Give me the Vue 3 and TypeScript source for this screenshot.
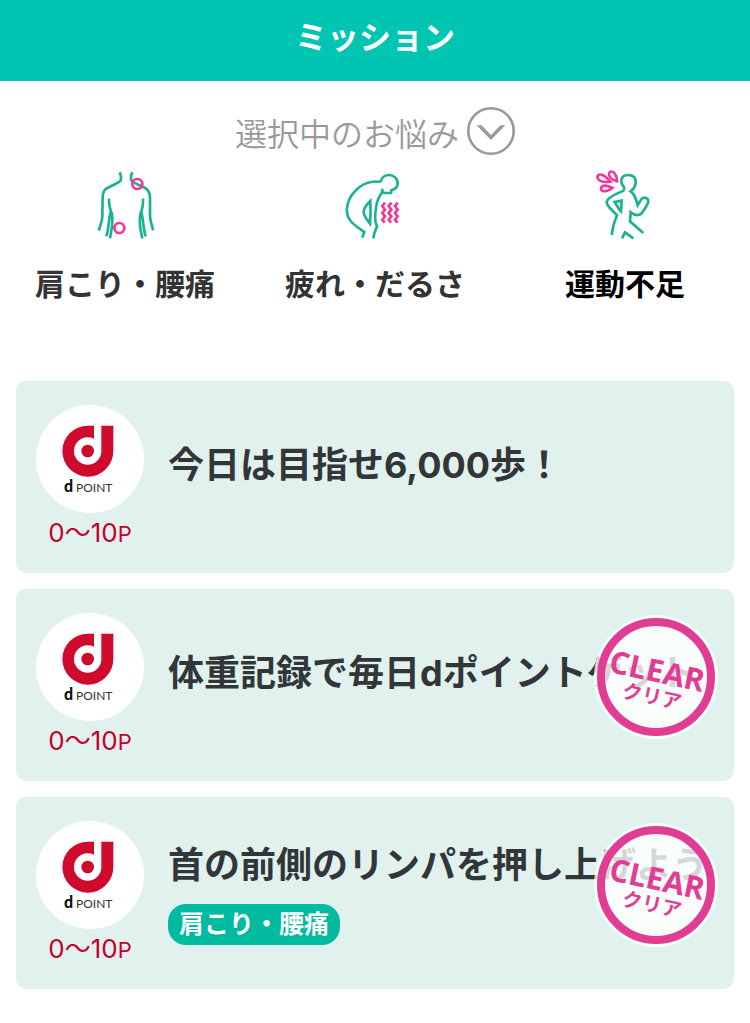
<script setup lang="ts">
import { ref } from 'vue'

interface Stroke {
  d: string
  accent?: boolean
}
interface Worry {
  label: string
  strong?: boolean
  strokes: Stroke[]
}
interface Mission {
  title: string
  tag?: string
  cleared: boolean
}

const open = ref(false)

const worries: Worry[] = [
  {
    label: '肩こり・腰痛',
    strokes: [
      { d: 'M118 37 C123 43 124 52 122 62 C112 72 88 78 76 88 C69 95 68 104 68 114 L67 170 C67 186 59 196 57 212' },
      { d: 'M158 37 C153 43 152 52 154 62 C164 72 188 78 201 88 C208 95 210 104 210 114 L210 170 C211 186 217 196 219 211' },
      { d: 'M87 116 C86 134 90 148 96 162 C99 183 95 211 90 235 M93 152 C85 180 87 206 79 229' },
      { d: 'M189 116 C190 134 187 148 181 162 C177 183 181 211 187 235 M183 152 C191 180 189 206 197 229' },
      { d: 'M187 72 A15 15 0 1 1 157 72 A15 15 0 1 1 187 72', accent: true },
      { d: 'M133 204 A15 15 0 1 1 103 204 A15 15 0 1 1 133 204', accent: true },
    ],
  },
  {
    label: '疲れ・だるさ',
    strokes: [
      { d: 'M152 66 C154 52 165 45 177 45 C192 45 203 56 203 70 C203 82 196 88 184 91 L183 99 L163 99 L157 96 L157 86' },
      { d: 'M152 66 C118 60 91 75 72 97 C52 119 45 153 56 174 C65 193 88 205 103 216 L97 233' },
      { d: 'M157 96 C148 108 141 121 139 138 C136 157 133 174 137 187 L141 199 C135 211 132 221 130 235' },
      { d: 'M121 123 C108 136 101 144 101 155 C101 169 112 179 120 191 C122 168 122 147 121 123 Z' },
      { d: 'M165 128 L157 138 L165 149 L157 159 L165 169 L157 179 L164 188', accent: true },
      { d: 'M184 128 L176 138 L184 149 L176 159 L184 169 L176 179 L183 188', accent: true },
      { d: 'M203 128 L195 138 L203 149 L195 159 L203 169 L195 179 L202 188', accent: true },
    ],
  },
  {
    label: '運動不足',
    strong: true,
    strokes: [
      { d: 'M133 91 L132 81 C122 72 121 57 130 49 C139 43 156 44 163 52 C170 62 169 82 152 94 C164 102 168 116 173 136 L183 119 C190 108 205 114 205 124 C205 134 194 145 188 156 C181 167 166 169 152 157 L150 184 L190 219' },
      { d: 'M133 91 C116 99 93 107 84 118 C77 126 80 133 87 141 L111 166 C106 179 101 191 99 203 L95 225' },
      { d: 'M125 122 L104 126 C111 137 115 146 123 154 Z' },
      { d: 'M126 235 L135 217 L160 235' },
      { d: 'M91 65 C76 67 59 65 54 56 C49 46 58 41 67 45 C76 48 83 56 91 65 Z', accent: true },
      { d: 'M111 64 C96 60 85 50 87 40 C89 33 98 33 103 39 C109 46 111 54 111 64 Z', accent: true },
      { d: 'M97 84 C88 92 69 98 64 90 C60 82 68 76 77 77 C84 78 90 81 97 84 Z', accent: true },
    ],
  },
]

const missions: Mission[] = [
  { title: '今日は目指せ6,000歩！', cleared: false },
  { title: '体重記録で毎日dポイントゲット', cleared: true },
  { title: '首の前側のリンパを押し上げよう', tag: '肩こり・腰痛', cleared: true },
]
</script>

<template>
  <div class="page">
    <header class="bar">
      <h1>ミッション</h1>
    </header>

    <main>
      <button class="picker" type="button" :aria-expanded="open" @click="open = !open">
        <span>選択中のお悩み</span>
        <svg class="chevron" viewBox="0 0 48 48" aria-hidden="true">
          <circle cx="24" cy="24" r="22.7" fill="none" stroke="#999" stroke-width="2.6" />
          <path d="M9.7 18.2 H14.5 L24 28 L33.5 18.2 H38.3 L24 33 Z" fill="#999" />
        </svg>
      </button>

      <ul class="worries">
        <li v-for="w in worries" :key="w.label" :class="{ strong: w.strong }">
          <svg class="figure" viewBox="0 0 270 270" aria-hidden="true">
            <path v-for="s in w.strokes" :key="s.d" :d="s.d" :class="{ accent: s.accent }" />
          </svg>
          <span>{{ w.label }}</span>
        </li>
      </ul>

      <ul class="missions">
        <li v-for="m in missions" :key="m.title">
          <a class="card" href="#">
            <div class="reward">
              <svg class="dpoint" viewBox="0 0 108 108" role="img" aria-label="d POINT">
                <circle cx="54" cy="54" r="54" fill="#fff" />
                <svg width="108" height="108" viewBox="108 105 324 324">
                  <path
                    fill="#cf0a2c"
                    d="M282 167 H263 A76.5 76.5 0 1 0 340 243 V167 H304 V243 A41 41 0 1 1 263 202 Q274 202 282 206 Z"
                  />
                  <circle cx="263" cy="243" r="19" fill="#cf0a2c" />
                </svg>
                <text class="mark" x="28" y="87">d</text>
                <text class="word" x="40" y="87">POINT</text>
              </svg>
              <p class="points">0〜10<small>P</small></p>
            </div>

            <div class="body" :class="{ plain: !m.tag }">
              <h2>{{ m.title }}</h2>
              <span v-if="m.tag" class="tag">{{ m.tag }}</span>
            </div>

            <svg v-if="m.cleared" class="stamp" viewBox="0 0 124 124" role="img" aria-label="CLEAR クリア">
              <circle cx="62" cy="62" r="62" fill="#fff" fill-opacity="0.8" />
              <circle cx="62" cy="62" r="55" fill="none" stroke="#e23d94" stroke-width="8" />
              <g transform="rotate(12 62 62)">
                <text class="clear-en" x="62" y="67">CLEAR</text>
                <text class="clear-ja" x="62" y="89">クリア</text>
              </g>
            </svg>
          </a>
        </li>
      </ul>
    </main>
  </div>
</template>

<style>
body {
  margin: 0;
  background: #fff;
}
</style>

<style scoped>
.page {
  font-family: Inter, 'Noto Sans CJK JP', sans-serif;
  color: #333;
}
h1,
h2,
p,
ul {
  margin: 0;
  padding: 0;
}
ul {
  list-style: none;
}
.bar {
  padding: 14px 0 19px;
  background: #00c5b2;
  color: #fff;
  text-align: center;
}
h1 {
  font-size: 32px;
  line-height: 48px;
  font-weight: 700;
}
.picker {
  display: flex;
  align-items: flex-end;
  justify-content: center;
  gap: 8px;
  width: 100%;
  padding: 26px 0 0;
  border: 0;
  background: none;
  color: #999;
  font-family: inherit;
  font-size: 32px;
  line-height: 40px;
  font-weight: 350;
  cursor: pointer;
}
.chevron {
  width: 48px;
  height: 48px;
}
.worries {
  display: grid;
  grid-template-columns: repeat(3, 1fr);
  padding-top: 5px;
}
.worries li {
  display: flex;
  flex-direction: column;
  align-items: center;
  gap: 12px;
  font-size: 30px;
  line-height: 44px;
  font-weight: 700;
}
.worries .strong {
  color: #000;
}
.figure {
  width: 90px;
  height: 90px;
  fill: none;
  stroke: #19b394;
  stroke-width: 8;
}
.figure .accent {
  stroke: #f0389a;
}
.missions {
  display: grid;
  gap: 16px;
  padding: 75px 16px 34px;
}
.card {
  position: relative;
  display: flex;
  gap: 24px;
  padding: 24px 20px;
  border-radius: 10px;
  background: #e1f2ee;
  color: #333638;
  text-decoration: none;
}
.reward {
  flex: none;
  width: 108px;
}
.dpoint {
  display: block;
  width: 108px;
  height: 108px;
}
.mark {
  font: 900 16px Lato, sans-serif;
  fill: #111;
}
.word {
  font: 400 12px Lato, sans-serif;
  fill: #333;
}
.points {
  padding-top: 4px;
  font-size: 26px;
  line-height: 32px;
  color: #c7002b;
  text-align: center;
  white-space: nowrap;
}
.points small {
  font-size: 22px;
  line-height: 1;
}
.body {
  display: flex;
  flex-direction: column;
  justify-content: center;
  align-items: flex-start;
  gap: 15px;
  min-width: 0;
}
.plain {
  padding-bottom: 24px;
}
h2 {
  font-size: 36px;
  line-height: 48px;
  font-weight: 700;
}
.tag {
  padding: 0 11px;
  border-radius: 18px;
  background: #00bb9f;
  color: #fff;
  font-size: 25px;
  line-height: 41px;
  font-weight: 700;
}
.stamp {
  position: absolute;
  top: 26px;
  right: 16px;
  width: 124px;
  height: 124px;
}
.stamp text {
  text-anchor: middle;
  fill: #e23d94;
}
.clear-en {
  font-family: 'Open Sans', sans-serif;
  font-size: 31px;
  font-weight: 700;
}
.clear-ja {
  font-family: 'Noto Sans CJK JP', sans-serif;
  font-size: 20px;
  font-weight: 700;
}
</style>
